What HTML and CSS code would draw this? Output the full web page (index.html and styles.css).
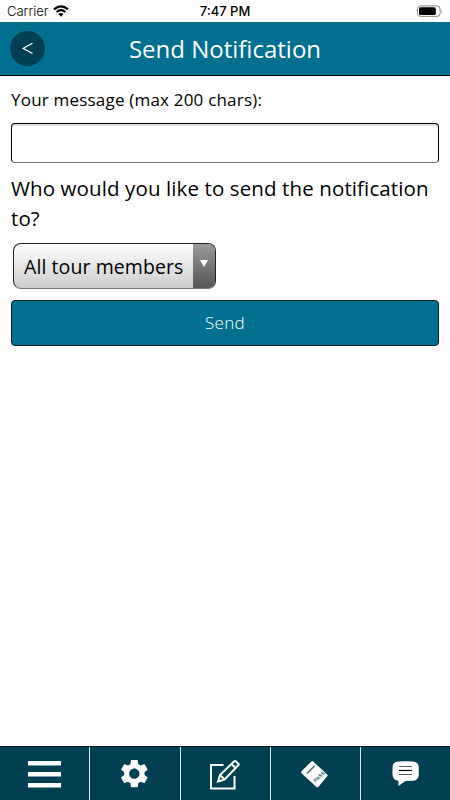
FILE: index.html
```html
<!DOCTYPE html>
<html lang="en">
<head>
<meta charset="utf-8">
<title>Send Notification</title>
<link rel="stylesheet" href="styles.css">
</head>
<body>
<div class="status">
  <div class="carrier"><span>Carrier</span>
    <svg width="16" height="12" viewBox="0 0 16 12" fill="none" stroke="#000" stroke-width="2.2"><path d="M1 4.300Q8-1.600 15 4.300M3.500 7Q8 3.200 12.500 7"/><path d="M5.400 9L8 11.700L10.600 9Q8 6.900 5.400 9Z" fill="#000" stroke="none"/></svg>
  </div>
  <span class="time">7:47 PM</span>
  <svg class="battery" width="27" height="13" viewBox="0 0 27 13"><rect x="1.500" y=".9" width="22.600" height="10.500" rx="3" fill="#fff" stroke="#8b8b8b"/><rect x="3" y="2.300" width="16.800" height="7.800" rx="1.500"/><path d="M25.300 4.500Q27 6.400 25.300 8.400Z" fill="#8b8b8b"/></svg>
</div>
<header class="header">
  <button class="back" aria-label="Back"><svg width="12" height="13" viewBox="0 0 12 13" fill="none" stroke="#fff" stroke-width="1.300"><path d="M10.500 1.200L1 6.400L10.500 11.500"/></svg></button>
  <h1>Send Notification</h1>
</header>
<main class="form">
  <label class="label" for="message">Your message (max 200 chars):</label>
  <input class="message" id="message" type="text" maxlength="200">
  <p class="question">Who would you like to send the notification to?</p>
  <div class="select"><span class="value">All tour members</span><span class="arrow"><svg width="8" height="7" viewBox="0 0 8 7"><path d="M0 0H8L4 7Z" fill="#fff"/></svg></span></div>
  <button class="send">Send</button>
</main>
<nav class="tabs">
  <div class="tab"><svg width="90" height="53" viewBox="0 0 90 53" fill="#fff"><path d="M28 14h33v4.500H28zM28 25h33v4.500H28zM28 36h33v4.500H28z"/></svg></div>
  <div class="tab"><svg width="90" height="53" viewBox="0 0 90 53"><g transform="translate(27.300 9.600) scale(1.420)"><path fill="#fff" d="M19.140 12.940c.04-.3.060-.61.060-.94 0-.32-.02-.64-.07-.94l2.030-1.580c.18-.14.230-.41.120-.61l-1.920-3.320c-.12-.22-.37-.29-.59-.22l-2.390.96c-.5-.38-1.030-.7-1.620-.94l-.36-2.540c-.04-.24-.24-.41-.48-.41h-3.840c-.24 0-.43.170-.47.410l-.36 2.540c-.59.240-1.130.57-1.620.94l-2.390-.96c-.22-.08-.47 0-.59.220L2.740 8.870c-.12.210-.08.470.12.610l2.030 1.580c-.05.300-.09.630-.09.940s.02.640.07.940l-2.030 1.580c-.18.140-.23.410-.12.610l1.920 3.320c.12.220.37.290.59.220l2.390-.96c.5.380 1.030.7 1.620.94l.36 2.540c.05.240.24.410.48.410h3.840c.24 0 .44-.17.470-.41l.36-2.540c.59-.24 1.130-.56 1.620-.94l2.390.96c.22.080.47 0 .59-.22l1.920-3.320c.12-.22.070-.47-.12-.61l-2.010-1.580zM12 15.600c-1.980 0-3.600-1.620-3.600-3.600s1.620-3.600 3.600-3.600 3.600 1.620 3.600 3.600-1.620 3.600-3.600 3.600z"/></g></svg></div>
  <div class="tab"><svg width="90" height="53" viewBox="1 0 90 53" fill="none" stroke="#fff" stroke-width="2"><path d="M43.500 18H31V41.500H54.500V29"/><path d="M38 34.500L40 28L54 14.500Q55 13.500 56 14.500L58.500 17Q59 17.500 58.500 18L44.500 32.500ZM40 28L44.500 32.500M51.500 17L56 21.500"/></svg></div>
  <div class="tab"><svg width="90" height="53" viewBox="1 0 90 53"><path d="M41.500 14.400Q42.300 13.800 43.200 14.500L57.200 27.500Q58 28.300 57.200 29.200L48.500 39.800Q47.500 41 46.500 40L31.500 26.200Q30.600 25.300 31.500 24.300Z" fill="#fff"/><path d="M37 26.500L44.500 19" stroke="#35606c" stroke-width="1.300"/><text class="pass" transform="translate(45.500 35.500) rotate(-43)">PASS</text></svg></div>
  <div class="tab"><svg width="90" height="53" viewBox="0 0 90 53"><path d="M37 14.500Q44 13.800 52 14.500Q57.500 15 57.800 20V28Q57.500 33.200 52 33.800L44.500 34L37.500 39V33.800Q32 33 31.500 28V20Q32 15 37 14.500Z" fill="#fff"/><path d="M38 19.500H51M38 27.500H51" stroke="#52616a"/><path d="M38 23.500H51" stroke="#000" stroke-width="1.200"/></svg></div>
</nav>
</body>
</html>
```
FILE: styles.css
```css
* { box-sizing: border-box; }
body {
  margin: 0;
  height: 800px;
  display: flex;
  flex-direction: column;
  background: #fff;
  color: #000;
  font-family: "Open Sans", sans-serif;
  overflow: hidden;
}
.status {
  height: 22px;
  flex: none;
  display: grid;
  grid-template-columns: 1fr auto 1fr;
  align-items: center;
  padding: 0 7px;
  font: 350 13px/22px Inter, sans-serif;
}
.carrier { display: flex; align-items: center; gap: 5px; }
.time { font-weight: 550; }
.battery { justify-self: end; }
.header {
  height: 54px;
  flex: none;
  display: grid;
  grid-template-columns: 34px 1fr 34px;
  align-items: center;
  padding: 0 10px;
  background: #006f90;
  border-bottom: 1px solid #000;
}
.header h1 {
  margin: 0;
  color: #fff;
  font-size: 24px;
  line-height: 52px;
  font-weight: 380;
  text-align: center;
}
.back {
  width: 35px;
  height: 35px;
  padding: 0;
  border: 0;
  border-radius: 50%;
  background: #004052;
  display: flex;
  align-items: center;
  justify-content: center;
}
.form {
  flex: 1;
  padding: 12px 11px 0;
  display: flex;
  flex-direction: column;
  align-items: stretch;
}
.label { font-size: 17px; font-weight: 380; line-height: 24px; height: 35px; letter-spacing: .2px; }
.message {
  height: 40px;
  flex: none;
  border: 1px solid #000;
  border-bottom-color: #777;
  border-radius: 4px;
  box-shadow: inset 0 2px 1px #ddd;
  background: #fff;
}
.question { margin: 11px 0 10px; font-size: 20.500px; font-weight: 380; line-height: 29.500px; letter-spacing: .11px; }
.select {
  width: 203px;
  height: 46px;
  margin-left: 2px;
  display: flex;
  border: 1px solid #222;
  border-bottom-color: #777;
  border-radius: 8px;
  overflow: hidden;
  background: linear-gradient(#fff, #ccc);
}
.value { flex: 1; padding-left: 10px; font-size: 19.500px; font-weight: 380; line-height: 45px; letter-spacing: .08px; white-space: nowrap; }
.arrow {
  width: 22px;
  display: flex;
  justify-content: center;
  padding-top: 16px;
  background: linear-gradient(#999, #555);
}
.send {
  height: 46px;
  margin-top: 11px;
  padding: 0;
  border: 1px solid #001c28;
  border-radius: 4px;
  background: #006f90;
  color: #fff;
  font: 360 17px/44px "Open Sans", sans-serif;
  letter-spacing: .3px;
}
.tabs {
  height: 54px;
  flex: none;
  display: grid;
  grid-template-columns: repeat(4, 90.250px) 1fr;
  background: #004052;
  border-top: 1px solid #001c24;
}
.tab { height: 53px; border-right: 1px solid #dde4e6; overflow: hidden; }
.tab:last-child { border-right: 0; }
.tab svg { display: block; }
.pass { font: 700 5px "Liberation Sans", sans-serif; fill: #35606c; }
```
